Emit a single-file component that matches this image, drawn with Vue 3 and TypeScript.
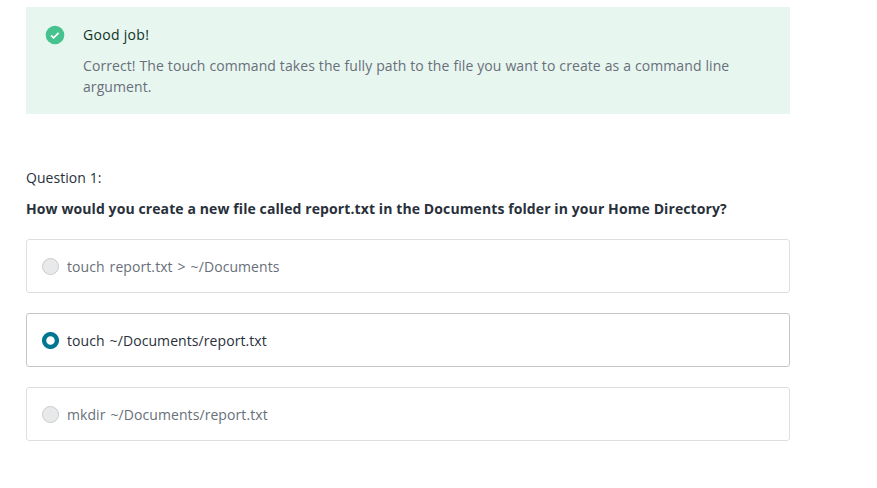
<script setup lang="ts">
interface Answer {
  text: string
  selected: boolean
}

const answers: Answer[] = [
  { text: 'touch report.txt > ~/Documents', selected: false },
  { text: 'touch ~/Documents/report.txt', selected: true },
  { text: 'mkdir ~/Documents/report.txt', selected: false },
]
</script>

<template>
  <main class="quiz">
    <section class="feedback">
      <svg class="check" viewBox="0 0 20 20" aria-hidden="true">
        <circle cx="10" cy="10" r="9.3" fill="#46c28e" />
        <path d="M6.1 10.3l2.5 2.5 5-5" fill="none" stroke="#fff" stroke-width="1.7" />
      </svg>
      <div>
        <h2 class="title">Good job!</h2>
        <p class="message">
          <span class="line">Correct! The touch command takes the fully path to the file you want to create as a command line</span>
          <span class="line">argument.</span>
        </p>
      </div>
    </section>
    <p class="number">Question 1:</p>
    <h1 class="question">How would you create a new file called report.txt in the Documents folder in your Home Directory?</h1>
    <div class="answers">
      <div v-for="a in answers" :key="a.text" class="answer" :class="{ selected: a.selected }">
        <svg class="radio" viewBox="0 0 17 17" aria-hidden="true">
          <circle v-if="a.selected" cx="8.5" cy="8.5" r="6.4" fill="#fff" stroke="#007791" stroke-width="4.3" />
          <circle v-else cx="8.5" cy="8.5" r="8" fill="#e8e9eb" stroke="#cacbcc" />
        </svg>
        <span class="label">{{ a.text }}</span>
      </div>
    </div>
  </main>
</template>

<style>
body {
  background: #fff;
}
</style>

<style scoped>
.quiz {
  box-sizing: border-box;
  width: 764px;
  margin-left: 26px;
  padding-top: 7px;
  font-family: "Open Sans", "Noto Sans", sans-serif;
  font-size: 14px;
  line-height: 21px;
  letter-spacing: 0.08px;
  color: #29303b;
}
.feedback {
  box-sizing: border-box;
  display: flex;
  height: 107px;
  padding: 17px 19px;
  background: #e8f6f0;
}
.check {
  flex: none;
  width: 20px;
  height: 20px;
  margin-top: 1px;
  margin-right: 18px;
}
.title,
.message,
.number,
.question {
  margin: 0;
  font-size: 14px;
  white-space: nowrap;
}
.title {
  font-weight: 400;
  color: #10331f;
  letter-spacing: 0.3px;
}
.message {
  margin-top: 10px;
  color: #686f7a;
  letter-spacing: 0.08px;
  word-spacing: 0.2px;
}
.line {
  display: block;
}
.number {
  margin-top: 53px;
  letter-spacing: 0.05px;
}
.question {
  margin-top: 10px;
  font-weight: 700;
  letter-spacing: 0.1px;
}
.answers {
  display: grid;
  gap: 20px;
  margin-top: 20px;
}
.answer {
  box-sizing: border-box;
  display: flex;
  align-items: center;
  height: 54px;
  padding-left: 15px;
  border: 1px solid #dedfe0;
  border-radius: 3px;
  color: #686f7a;
}
.answer.selected {
  border-color: #c4c6c8;
  color: #29303b;
}
.label {
  word-spacing: 1.2px;
}
.radio {
  flex: none;
  width: 17px;
  height: 17px;
  margin-right: 8px;
}
</style>
